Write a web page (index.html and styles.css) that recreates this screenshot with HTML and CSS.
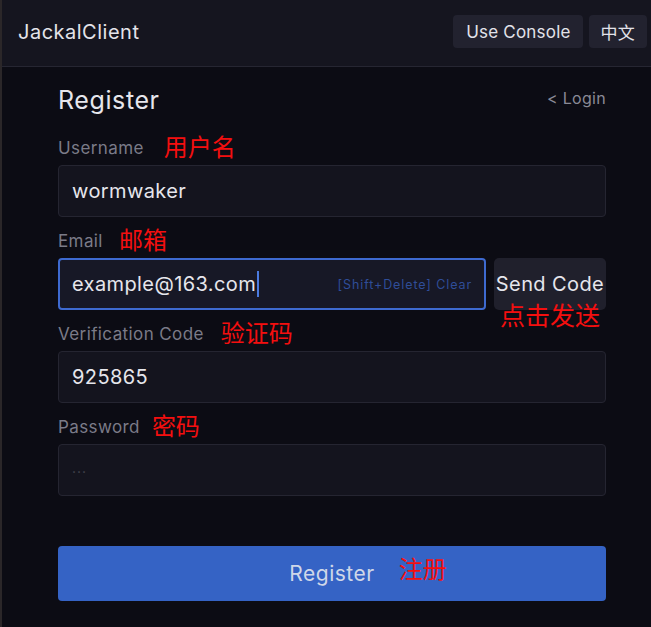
FILE: index.html
```html
<!DOCTYPE html>
<html>
<head>
<meta charset="utf-8">
<link rel="stylesheet" href="styles.css">
</head>
<body>
<div class="app">
  <header class="topbar">
    <div class="brand">JackalClient</div>
    <div class="actions">
      <button class="tbtn">Use Console</button>
      <button class="tbtn cjk">中文</button>
    </div>
  </header>
  <main class="content">
    <div class="title-row">
      <h1 class="title">Register</h1>
      <a class="login-link">&lt; Login</a>
    </div>

    <div class="field first">
      <div class="label">Username <span class="note n-user">用户名</span></div>
      <div class="input"><span class="value">wormwaker</span></div>
    </div>

    <div class="field">
      <div class="label">Email <span class="note n-email">邮箱</span></div>
      <div class="row">
        <div class="input focus"><span class="value">example@163.com</span><span class="caret"></span><span class="hint">[Shift+Delete] Clear</span></div>
        <div class="send-wrap">
          <button class="send">Send Code</button>
          <span class="note send-note">点击发送</span>
        </div>
      </div>
    </div>

    <div class="field">
      <div class="label">Verification Code <span class="note n-code">验证码</span></div>
      <div class="input"><span class="value">925865</span></div>
    </div>

    <div class="field">
      <div class="label">Password <span class="note n-pass">密码</span></div>
      <div class="input"><span class="placeholder">...</span></div>
    </div>

    <button class="submit"><span class="submit-text">Register<span class="note n-submit">注册</span></span></button>
  </main>
</div>
</body>
</html>
```

FILE: styles.css
```css
html, body {
  margin: 0;
  padding: 0;
  background: #0c0c14;
  height: 100%;
}
body {
  font-family: Inter, "Noto Sans", "Noto Sans CJK SC", sans-serif;
  color: #e2e2e8;
}
.app {
  min-height: 627px;
  border-left: 2px solid #2b2729;
  box-sizing: border-box;
}
.topbar {
  height: 67px;
  background: #15151f;
  border-bottom: 1px solid #262632;
  display: flex;
  align-items: center;
  justify-content: space-between;
  padding: 0 4px 3px 16px;
  box-sizing: border-box;
}
.brand {
  font-size: 20px;
  color: #e4e4ea;
  letter-spacing: 0.5px;
}
.actions {
  display: flex;
  gap: 6px;
}
.tbtn {
  height: 33px;
  background: #22222f;
  border: none;
  border-radius: 4px;
  color: #e2e2ea;
  font-family: Inter, "Noto Sans CJK SC", sans-serif;
  font-size: 17px;
  letter-spacing: 0.2px;
  padding: 0 12px 0 13px;
}
.tbtn.cjk {
  font-family: "Noto Sans CJK SC", sans-serif;
  padding: 0 12px;
}
.content {
  width: 548px;
  margin-left: 56px;
  padding-top: 16px;
}
.title-row {
  display: flex;
  justify-content: space-between;
  align-items: center;
  height: 34px;
}
.title {
  margin: 0;
  font-size: 25px;
  font-weight: 400;
  letter-spacing: 0.6px;
  color: #e6e6ec;
}
.login-link {
  font-size: 16px;
  color: #8a8a96;
  letter-spacing: 0.3px;
  margin-top: -4px;
}
.field {
  display: flex;
  flex-direction: column;
}
.label {
  height: 41px;
  display: flex;
  align-items: center;
  font-size: 17px;
  letter-spacing: 0.4px;
  color: #7b7b88;
  padding-top: 6px;
  box-sizing: border-box;
}
.field.first .label { height: 48px; padding-top: 13px; }
.note {
  font-family: "Noto Sans CJK SC", sans-serif;
  color: #f40f0f;
  font-size: 24px;
  line-height: 1;
  letter-spacing: 0;
  margin-left: 20px;
  margin-top: -3px;
}
.n-user { margin-left: 20px; }
.n-email { margin-left: 16px; }
.n-code { margin-left: 17px; }
.n-pass { margin-left: 12px; }
.row {
  display: flex;
  gap: 8px;
}
.input {
  position: relative;
  height: 52px;
  flex: none;
  box-sizing: border-box;
  background: #14141e;
  border: 1px solid #252531;
  border-radius: 4px;
  display: flex;
  align-items: center;
  padding-left: 13px;
}
.row .input { flex: 1; }
.input.focus {
  border: 2px solid #3e6ad0;
  padding-left: 12px;
  background: #171826;
}
.value {
  font-size: 20px;
  letter-spacing: 0.4px;
  color: #e6e6ec;
}
.caret {
  display: inline-block;
  width: 2px;
  height: 26px;
  background: #4a7ae0;
  margin-left: 1px;
}
.hint {
  margin-left: auto;
  margin-right: 12px;
  font-size: 12.5px;
  letter-spacing: 0.9px;
  color: #2f4d98;
}
.placeholder {
  font-size: 14px;
  color: #44444f;
  margin-top: -6px;
  letter-spacing: 1px;
}
.send-wrap {
  position: relative;
  width: 112px;
}
.send {
  width: 112px;
  height: 52px;
  background: #20202c;
  border: none;
  border-radius: 5px;
  color: #e6e6ec;
  font-family: Inter, sans-serif;
  font-size: 20px;
  letter-spacing: 0.4px;
  padding: 0;
  white-space: nowrap;
}
.send-note {
  position: absolute;
  left: 6px;
  top: 44px;
  margin: 0;
  font-size: 25px;
  white-space: nowrap;
}
.submit {
  margin-top: 50px;
  width: 548px;
  height: 55px;
  background: #3563c5;
  border: none;
  border-radius: 4px;
  display: flex;
  align-items: center;
  justify-content: center;
  padding: 0;
}
.submit-text {
  position: relative;
  font-family: Inter, sans-serif;
  font-size: 21px;
  letter-spacing: 0.5px;
  color: #cfd7e8;
}
.n-submit {
  position: absolute;
  left: 100%;
  top: -2px;
  margin-left: 24px;
  white-space: nowrap;
}
```
